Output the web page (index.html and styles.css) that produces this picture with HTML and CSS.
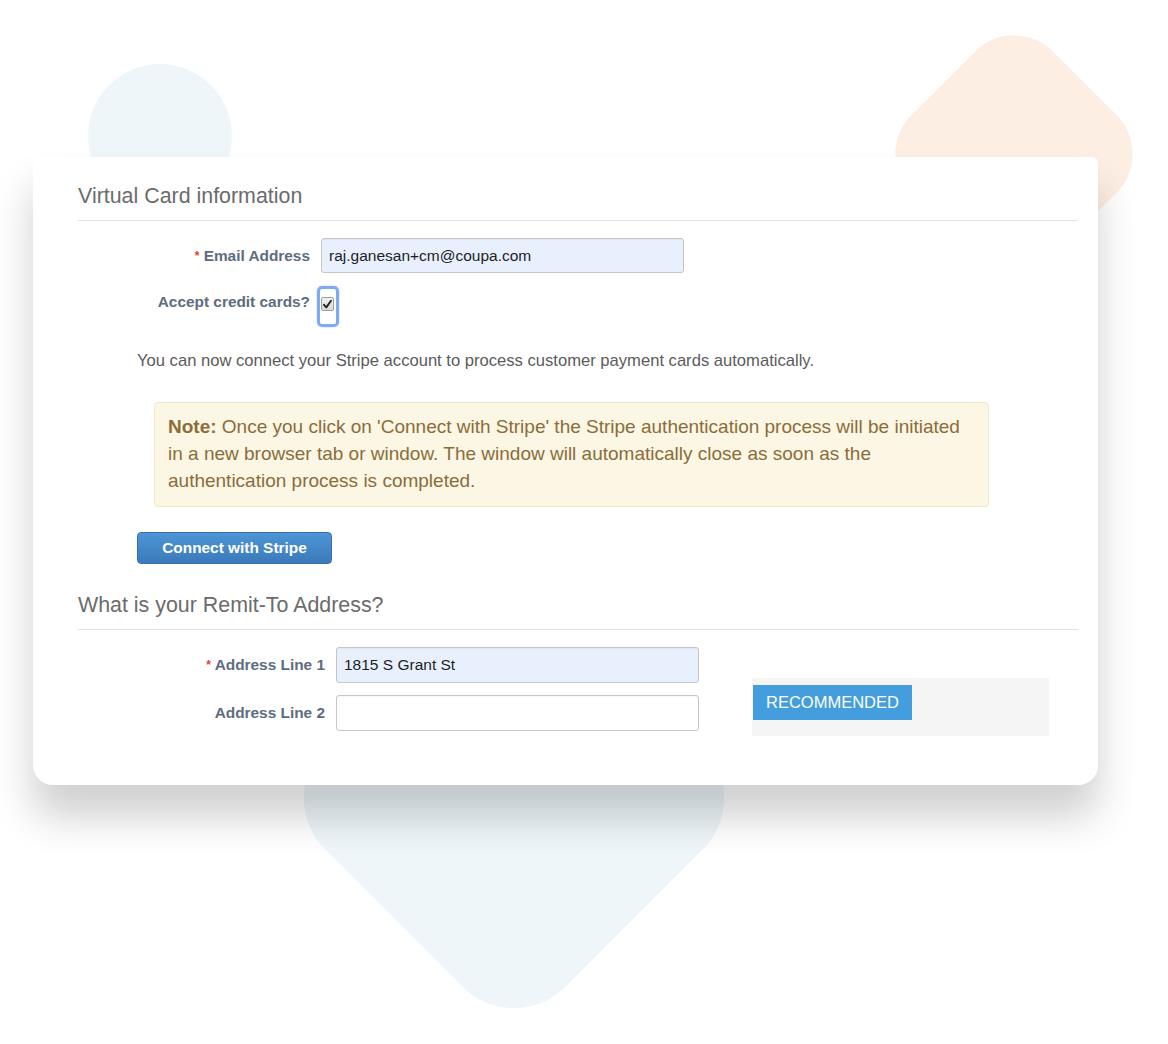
FILE: index.html
```html
<!DOCTYPE html>
<html>
<head>
<meta charset="utf-8">
<title>Virtual Card information</title>
<link rel="stylesheet" href="styles.css">
</head>

<body>
<div class="stage">
	<div class="blob blob-circle"></div>
	<div class="blob blob-peach"></div>
	<div class="blob blob-drop"></div>

	<div class="card">
		<h2 class="section-title">Virtual Card information</h2>

		<div class="row row-email">
			<label class="label"><span class="req">*</span> Email Address</label>
			<input class="text-input filled" type="text" value="raj.ganesan+cm@coupa.com">
		</div>

		<div class="row row-check">
			<label class="label">Accept credit cards?</label>
			<span class="focus-ring">
				<span class="checkbox">
					<svg width="11" height="11" viewBox="0 0 11 11"><path d="M2 5.8 L4.3 8.4 L9 1.8" fill="none" stroke="#222" stroke-width="1.9" stroke-linecap="round" stroke-linejoin="round"/></svg>
				</span>
			</span>
		</div>

		<p class="intro">You can now connect your Stripe account to process customer payment cards automatically.</p>

		<div class="note">
			<b>Note:</b> Once you click on 'Connect with Stripe' the Stripe authentication process will be initiated<br>
			in a new browser tab or window. The window will automatically close as soon as the<br>
			authentication process is completed.
		</div>

		<button class="btn-stripe">Connect with Stripe</button>

		<h2 class="section-title title-remit">What is your Remit-To Address?</h2>

		<div class="address">
			<div class="address-fields">
				<div class="row row-addr">
					<label class="label"><span class="req">*</span> Address Line 1</label>
					<input class="text-input filled" type="text" value="1815 S Grant St">
				</div>
				<div class="row row-addr row-addr2">
					<label class="label">Address Line 2</label>
					<input class="text-input" type="text" value="">
				</div>
			</div>
			<div class="recommend">
				<span class="badge">RECOMMENDED</span>
			</div>
		</div>
	</div>
</div>
</body>
</html>
```

FILE: styles.css
```css
html, body{
	margin:0;
	padding:0;
	background:#fff;
}
body{
	font-family:"Liberation Sans", Arial, Helvetica, sans-serif;
}
.stage{
	position:relative;
	width:1168px;
	height:1044px;
	overflow:hidden;
	padding-top:157px;
	box-sizing:border-box;
}

/* background shapes */
.blob{
	position:absolute;
	z-index:0;
}
.blob-circle{
	left:88px;
	top:64px;
	width:144px;
	height:144px;
	border-radius:50%;
	background:#eff6fa;
}
.blob-peach{
	left:914px;
	top:54px;
	width:200px;
	height:200px;
	border-radius:55px;
	background:#fdeee3;
	transform:rotate(45deg);
}
.blob-drop{
	left:344px;
	top:628px;
	width:340px;
	height:340px;
	border-radius:73px;
	background:#eef6fa;
	transform:rotate(45deg);
}

/* card */
.card{
	position:relative;
	z-index:1;
	margin-left:33px;
	width:1065px;
	height:628px;
	box-sizing:border-box;
	padding:27px 20px 0 45px;
	background:#fff;
	border-radius:0 6px 20px 20px;
	box-shadow:0 32px 40px rgba(0,0,0,0.19);
}
.section-title{
	margin:0;
	padding-bottom:12px;
	border-bottom:1px solid #e2e2e2;
	font-size:21.4px;
	line-height:24px;
	font-weight:normal;
	color:#6b6b6b;
}

.row{
	display:flex;
	align-items:center;
}
.label{
	flex:none;
	box-sizing:border-box;
	width:243px;
	padding-right:11px;
	text-align:right;
	font-size:15.4px;
	line-height:18px;
	font-weight:bold;
	color:#5d6c80;
}
.req{
	color:#e2412f;
	font-size:12px;
	vertical-align:top;
}
.text-input{
	box-sizing:border-box;
	width:363px;
	height:35px;
	margin:0;
	padding:0 7px;
	border:1px solid #c6c6c6;
	border-radius:3px;
	background:#fff;
	font-family:"Liberation Sans", Arial, sans-serif;
	font-size:15.5px;
	color:#1e1e1e;
	box-shadow:inset 0 1px 1px rgba(0,0,0,0.04);
}
.text-input.filled{
	background:#e8f0fe;
}

.row-email{
	margin-top:17px;
}
.row-check{
	margin-top:13px;
	align-items:flex-start;
}
.row-check .label{
	padding-top:7px;
}
.focus-ring{
	display:block;
	box-sizing:border-box;
	width:22px;
	height:41px;
	margin-left:-4px;
	padding:8px 0 0 1px;
	border:3px solid #80aaf0;
	border-radius:5px;
	box-shadow:0 0 2px rgba(90,140,230,0.5);
}
.checkbox{
	display:flex;
	align-items:center;
	justify-content:center;
	box-sizing:border-box;
	width:13px;
	height:14px;
	border:1px solid #9d9d9d;
	border-radius:2px;
	background:linear-gradient(#f1f1f1, #d9d9d9);
}

.intro{
	margin:24px 0 0 59px;
	font-size:16.6px;
	line-height:20px;
	color:#5b5b5b;
}

.note{
	box-sizing:border-box;
	width:835px;
	height:105px;
	margin:31px 0 0 76px;
	padding:10px 13px 12px;
	border:1px solid #f4e7c5;
	border-radius:4px;
	background:#fcf6e4;
	font-size:19px;
	line-height:27px;
	color:#8a6d3b;
	white-space:nowrap;
}

.btn-stripe{
	display:block;
	box-sizing:border-box;
	width:195px;
	height:32px;
	margin:25px 0 0 59px;
	padding:0;
	border:1px solid #3772b0;
	border-radius:4px;
	background:linear-gradient(#4d95d5, #3b7aba);
	font-family:"Liberation Sans", Arial, sans-serif;
	font-size:15.4px;
	font-weight:bold;
	color:#fff;
}

.title-remit{
	margin-top:29px;
}

.address{
	display:flex;
	align-items:flex-start;
}
.row-addr{
	margin-top:17px;
}
.row-addr .label{
	width:258px;
}
.row-addr .text-input{
	height:36px;
}
.row-addr2{
	margin-top:12px;
}
.recommend{
	width:297px;
	height:58px;
	margin:48px 0 0 53px;
	box-sizing:border-box;
	padding:7px 0 0 1px;
	background:#f5f5f5;
}
.badge{
	display:inline-block;
	height:35px;
	padding:0 13px;
	background:#449ddc;
	font-size:16.5px;
	line-height:35px;
	color:#fff;
}
```
